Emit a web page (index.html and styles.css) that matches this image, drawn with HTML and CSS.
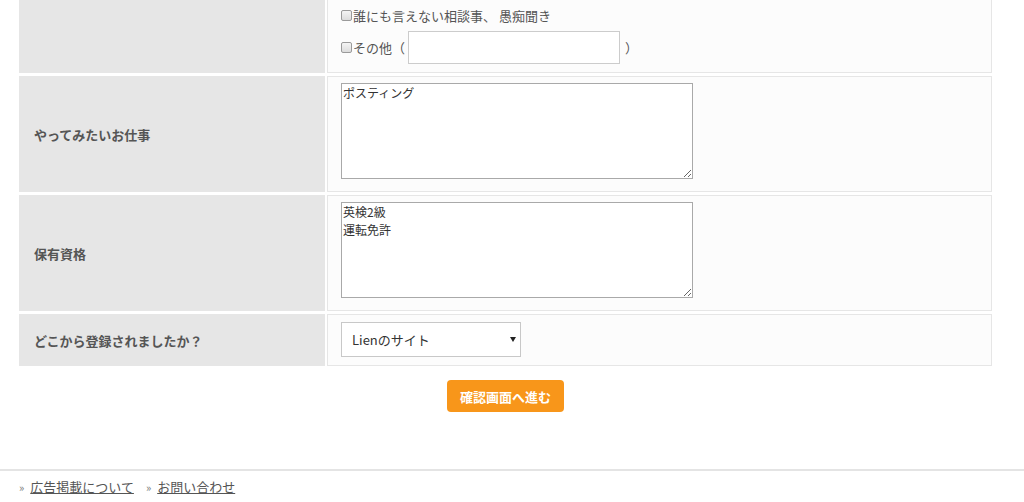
FILE: index.html
```html
<!DOCTYPE html>
<html lang="ja">
<head>
<meta charset="utf-8">
<link rel="stylesheet" href="styles.css">
</head>
<body>
<div class="page">
  <table class="form">
    <tr>
      <th></th>
      <td class="checks">
        <div class="line"><input type="checkbox" class="cb"><span>誰にも言えない相談事、 愚痴聞き</span></div>
        <div class="line other"><input type="checkbox" class="cb"><span>その他（</span><input type="text" class="txt"><span class="close">）</span></div>
      </td>
    </tr>
    <tr>
      <th>やってみたいお仕事</th>
      <td class="area"><textarea class="ta">ポスティング</textarea></td>
    </tr>
    <tr>
      <th>保有資格</th>
      <td class="area"><textarea class="ta">英検2級
運転免許</textarea></td>
    </tr>
    <tr>
      <th>どこから登録されましたか？</th>
      <td class="sel">
        <div class="select-wrap">
          <select class="select"><option>Lienのサイト</option></select>
        </div>
      </td>
    </tr>
  </table>
  <div class="actions">
    <button class="submit" type="button">確認画面へ進む</button>
  </div>
</div>
<footer class="footer">
  <a href="#" class="flink">広告掲載について</a>
  <a href="#" class="flink">お問い合わせ</a>
</footer>
</body>
</html>
```
FILE: styles.css
```css
html, body {
  margin: 0;
  padding: 0;
  background: #fff;
  font-family: "Noto Sans CJK JP", "Noto Sans", sans-serif;
  font-size: 13px;
  color: #555;
}

.page {
  width: 977px;
  margin: 0 0 0 17px;
}

.form {
  border-collapse: separate;
  border-spacing: 2px 3px;
  width: 977px;
  margin-top: -11px;
  table-layout: fixed;
}

.form th {
  width: 291px;
  background: #e6e6e6;
  text-align: left;
  vertical-align: middle;
  padding: 0 0 0 15px;
  font-weight: bold;
  font-size: 13px;
  color: #555;
}

.form td {
  background: #fcfcfc;
  border: 1px solid #e6e6e6;
  padding: 7px 13px;
}

.checks {
  padding: 7px 13px 8px !important;
}

.line {
  display: flex;
  align-items: center;
  height: 31px;
  color: #555;
}

.line.other {
  height: 33px;
}

.cb {
  appearance: none;
  -webkit-appearance: none;
  width: 11px;
  height: 11px;
  margin: 0 1px 0 0;
  border: 1px solid #9a9a9a;
  border-radius: 2px;
  background: linear-gradient(#f4f4f4, #dcdcdc);
  box-sizing: border-box;
  flex: none;
}

.txt {
  width: 212px;
  height: 33px;
  box-sizing: border-box;
  border: 1px solid #ccc;
  background: #fff;
  margin: 0 0 0 3px;
  padding: 0 6px;
}

.close {
  margin-left: 5px;
}

.area {
  padding: 6px 13px 12px !important;
}

.ta {
  display: block;
  width: 352px;
  height: 96px;
  box-sizing: border-box;
  border: 1px solid #a9a9a9;
  background: #fff;
  padding: 0 1px;
  margin: 0;
  font-family: "Noto Sans CJK JP", sans-serif;
  font-size: 12px;
  line-height: 18px;
  color: #333;
}

.sel {
  padding: 7px 13px 8px !important;
}

.select-wrap {
  position: relative;
  width: 180px;
  height: 35px;
}

.select {
  appearance: none;
  -webkit-appearance: none;
  width: 180px;
  height: 35px;
  box-sizing: border-box;
  border: 1px solid #c8c8c8;
  background: #fff;
  padding: 0 10px;
  font-family: "Noto Sans CJK JP", sans-serif;
  font-size: 13px;
  color: #333;
  display: block;
}

.select-wrap::after {
  content: "";
  position: absolute;
  right: 5px;
  top: 15px;
  border-left: 3px solid transparent;
  border-right: 3px solid transparent;
  border-top: 5px solid #222;
  pointer-events: none;
}

.actions {
  display: flex;
  justify-content: center;
  padding: 11px 0 0;
  height: 100px;
  box-sizing: border-box;
}

.submit {
  width: 117px;
  height: 32px;
  border: 0;
  border-radius: 4px;
  background: #f8961a;
  color: #fff;
  font-family: "Noto Sans CJK JP", sans-serif;
  font-weight: bold;
  font-size: 13px;
  padding: 0;
}

.footer {
  border-top: 2px solid #e4e4e4;
  padding: 6px 0 0 19px;
  display: flex;
  gap: 12px;
  font-size: 13px;
}

.flink {
  color: #555;
  text-decoration: underline;
}

.flink::before {
  content: "»";
  display: inline-block;
  margin-right: 6px;
  color: #777;
  font-size: 11px;
  text-decoration: none;
}
```
